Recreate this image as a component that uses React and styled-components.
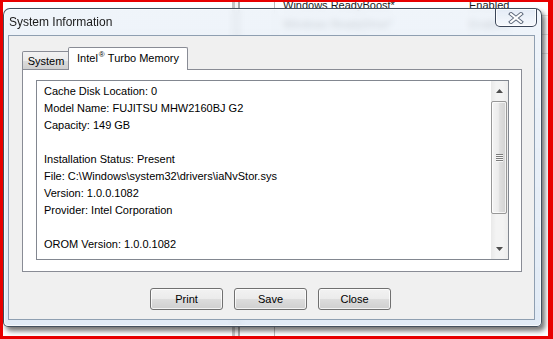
import React from "react";
import styled, { createGlobalStyle } from "styled-components";

const GlobalStyle = createGlobalStyle`
  html, body { margin: 0; padding: 0; background: #ffffff; }
  body { font-family: "Liberation Sans", Arial, sans-serif; }
`;

const Screen = styled.div`
  position: relative;
  width: 553px;
  height: 339px;
  box-sizing: border-box;
  border: 3px solid #e80000;
  border-top-width: 2px;
  border-right-width: 5px;
  background: #ffffff;
  overflow: hidden;
`;

/* ---------- application behind the dialog ---------- */
const Backdrop = styled.div`
  position: absolute;
  inset: 0;
  display: flex;
  font-family: "Liberation Sans", Arial, sans-serif;
  font-size: 11px;
  color: #1a1a1a;
`;

const EmptyPane = styled.div`
  width: ${(p) => p.$w}px;
  flex: none;
`;

const Splitter = styled.div`
  width: 10px;
  flex: none;
  background: linear-gradient(
    to right,
    #ffffff 0 2px,
    #c4c4c4 2px 5px,
    #f3f3f3 5px 8px,
    #a9a9a9 8px 10px
  );
`;

const ColumnLine = styled.div`
  width: 1px;
  flex: none;
  background: #b9b9b9;
`;

const ListColumn = styled.div`
  width: ${(p) => (p.$w ? `${p.$w}px` : "auto")};
  flex: ${(p) => (p.$w ? "none" : "1")};
  padding-left: ${(p) => p.$pad}px;
  margin-top: -5px;
  display: flex;
  flex-direction: column;
`;

const ListRow = styled.div`
  height: 18px;
  line-height: 16px;
  white-space: nowrap;
  border-bottom: 1px solid #e4e4e4;
`;

/* ---------- dialog window ---------- */
const Window = styled.div`
  position: absolute;
  left: 0;
  top: 6px;
  width: 539px;
  height: 319px;
  box-sizing: border-box;
  display: flex;
  flex-direction: column;
  padding: 0 6px 6px 4px;
  border: 1px solid rgba(38, 50, 66, 0.85);
  border-radius: 7px 7px 5px 5px;
  background: linear-gradient(
    to bottom,
    rgba(236, 242, 249, 0.82),
    rgba(220, 231, 244, 0.85)
  );
  backdrop-filter: blur(3px);
  box-shadow: inset 0 0 0 1px rgba(255, 255, 255, 0.75),
    3px 4px 5px rgba(0, 0, 0, 0.55);
  z-index: 1;
`;

const TitleBar = styled.div`
  height: 26px;
  flex: none;
  display: flex;
  justify-content: space-between;
  align-items: flex-start;
`;

const Title = styled.div`
  margin-top: 6px;
  margin-left: 1px;
  font-family: "Liberation Sans", Arial, sans-serif;
  font-size: 12px;
  color: #1b1b1b;
  line-height: 14px;
`;

const CloseButton = styled.div`
  flex: none;
  width: 42px;
  height: 18px;
  margin-right: -2px;
  box-sizing: border-box;
  display: flex;
  align-items: center;
  justify-content: center;
  border: 1px solid rgba(40, 52, 72, 0.9);
  border-top: none;
  border-radius: 0 0 5px 5px;
  background: linear-gradient(
    to bottom,
    rgba(226, 234, 245, 0.9),
    rgba(246, 249, 253, 0.95)
  );
  box-shadow: inset 0 0 0 1px rgba(255, 255, 255, 0.85);
`;

const Client = styled.div`
  flex: 1;
  display: flex;
  flex-direction: column;
  padding: 11px 12px 9px 13px;
  background: #f0f0f0;
  border: 1px solid #8f9fb1;
`;

const TabStrip = styled.div`
  height: 22px;
  flex: none;
  display: flex;
  align-items: flex-end;
`;

const Tab = styled.div`
  position: relative;
  box-sizing: border-box;
  width: ${(p) => p.$w}px;
  height: ${(p) => (p.$active ? 23 : 18)}px;
  margin-left: ${(p) => (p.$active ? -2 : 0)}px;
  margin-bottom: ${(p) => (p.$active ? -1 : 0)}px;
  z-index: ${(p) => (p.$active ? 2 : 1)};
  display: flex;
  align-items: center;
  justify-content: center;
  padding-bottom: ${(p) => (p.$active ? 3 : 0)}px;
  border: 1px solid #898c95;
  border-bottom: none;
  border-radius: 2px 2px 0 0;
  background: ${(p) =>
    p.$active
      ? "#ffffff"
      : "linear-gradient(to bottom, #f2f2f2 0%, #ebebeb 50%, #dddddd 51%, #cfcfcf 100%)"};
  font-size: 11px;
  color: #000;
  white-space: nowrap;
`;

const Reg = styled.span`
  font-size: 8px;
  position: relative;
  top: -3px;
  margin-left: 1px;
`;

const Panel = styled.div`
  height: 203px;
  flex: none;
  box-sizing: border-box;
  display: flex;
  padding: 10px 12px 11px 13px;
  border: 1px solid #898c95;
  background: #ffffff;
`;

const ListBox = styled.div`
  flex: 1;
  display: flex;
  border: 1px solid #828790;
  background: #ffffff;
`;

const InfoText = styled.div`
  flex: 1;
  padding: 2px 7px;
  font-size: 11px;
  color: #000;
`;

const InfoLine = styled.div`
  height: 17px;
  line-height: 17px;
  white-space: nowrap;
`;

const Scrollbar = styled.div`
  width: 17px;
  flex: none;
  display: flex;
  flex-direction: column;
  background: linear-gradient(to right, #e9e9e9, #f3f3f3 30%, #f3f3f3 70%, #ececec);
`;

const ArrowButton = styled.div`
  height: 20px;
  flex: none;
  display: flex;
  align-items: center;
  justify-content: center;
`;

const Track = styled.div`
  flex: 1;
  display: flex;
  flex-direction: column;
`;

const Thumb = styled.div`
  height: 113px;
  box-sizing: border-box;
  margin: 0 1px 0 0;
  display: flex;
  align-items: center;
  justify-content: center;
  border: 1px solid #979797;
  border-radius: 2px;
  background: linear-gradient(
    to right,
    #f4f4f4 0%,
    #ececec 45%,
    #dedede 55%,
    #d2d2d2 100%
  );
  box-shadow: inset 0 0 0 1px rgba(255, 255, 255, 0.7);
`;

const Gripper = styled.div`
  width: 7px;
  height: 8px;
  background: repeating-linear-gradient(
    to bottom,
    #7b7b7b 0 1px,
    #f7f7f7 1px 2px
  );
`;

const ButtonRow = styled.div`
  margin-top: 16px;
  padding-right: 3px;
  display: flex;
  justify-content: center;
  gap: 11px;
`;

const Button = styled.div`
  width: 73px;
  height: 22px;
  box-sizing: border-box;
  display: flex;
  align-items: center;
  justify-content: center;
  border: 1px solid #707070;
  border-radius: 3px;
  background: linear-gradient(
    to bottom,
    #f2f2f2 0%,
    #ebebeb 50%,
    #dddddd 51%,
    #cfcfcf 100%
  );
  box-shadow: inset 0 0 0 1px rgba(255, 255, 255, 0.75);
  font-size: 11px;
  color: #000;
`;

const CloseGlyph = () => (
  <svg width="16" height="12" viewBox="0 0 16 12">
    <g strokeLinecap="square">
      <path d="M3 2 L13 10 M13 2 L3 10" stroke="#5f6a7c" strokeWidth="4" />
      <path d="M3 2 L13 10 M13 2 L3 10" stroke="#ffffff" strokeWidth="2" />
    </g>
  </svg>
);

const Arrow = ({ up }) => (
  <svg width="7" height="4" viewBox="0 0 7 4">
    <path d={up ? "M0 4 L3.5 0 L7 4 Z" : "M0 0 L3.5 4 L7 0 Z"} fill="#4e4e4e" />
  </svg>
);

const lines = [
  "Cache Disk Location: 0",
  "Model Name: FUJITSU MHW2160BJ G2",
  "Capacity: 149 GB",
  "",
  "Installation Status: Present",
  "File: C:\\Windows\\system32\\drivers\\iaNvStor.sys",
  "Version: 1.0.0.1082",
  "Provider: Intel Corporation",
  "",
  "OROM Version: 1.0.0.1082",
];

export default function App() {
  return (
    <>
      <GlobalStyle />
      <Screen>
        <Backdrop>
          <EmptyPane $w={227} />
          <Splitter />
          <EmptyPane $w={34} />
          <ColumnLine />
          <ListColumn $w={180} $pad={8}>
            <ListRow>Windows ReadyBoost*</ListRow>
            <ListRow>Windows ReadyDrive*</ListRow>
            <ListRow>Windows ReadyBoost*</ListRow>
          </ListColumn>
          <ListColumn $pad={6}>
            <ListRow>Enabled</ListRow>
            <ListRow>Enabled</ListRow>
            <ListRow>Enabled</ListRow>
          </ListColumn>
        </Backdrop>

        <Window>
          <TitleBar>
            <Title>System Information</Title>
            <CloseButton>
              <CloseGlyph />
            </CloseButton>
          </TitleBar>
          <Client>
            <TabStrip>
              <Tab $w={48}>System</Tab>
              <Tab $w={120} $active>
                Intel<Reg>®</Reg>&nbsp;Turbo Memory
              </Tab>
            </TabStrip>
            <Panel>
              <ListBox>
                <InfoText>
                  {lines.map((l, i) => (
                    <InfoLine key={i}>{l}</InfoLine>
                  ))}
                </InfoText>
                <Scrollbar>
                  <ArrowButton>
                    <Arrow up />
                  </ArrowButton>
                  <Track>
                    <Thumb>
                      <Gripper />
                    </Thumb>
                  </Track>
                  <ArrowButton>
                    <Arrow />
                  </ArrowButton>
                </Scrollbar>
              </ListBox>
            </Panel>
            <ButtonRow>
              <Button>Print</Button>
              <Button>Save</Button>
              <Button>Close</Button>
            </ButtonRow>
          </Client>
        </Window>
      </Screen>
    </>
  );
}
